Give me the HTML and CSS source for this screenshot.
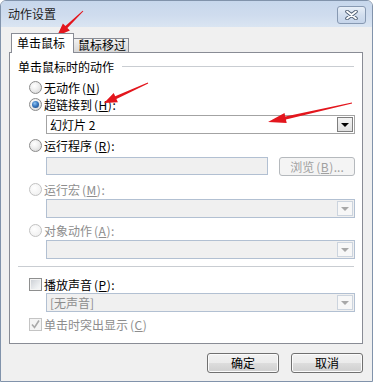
FILE: index.html
```html
<!DOCTYPE html>
<html lang="zh-CN">
<head>
<meta charset="utf-8">
<title>动作设置</title>
<link rel="stylesheet" href="styles.css">
</head>
<body>
<div class="window">
  <div class="titlebar">
    <span class="title">动作设置</span>
    <div class="close">
      <svg width="13" height="10" viewBox="0 0 13 10">
        <path d="M2 1.5 L11 8.5 M11 1.5 L2 8.5" stroke="#4f5f74" stroke-width="3.6" stroke-linecap="round" fill="none"/>
        <path d="M2 1.5 L11 8.5 M11 1.5 L2 8.5" stroke="#ffffff" stroke-width="1.8" stroke-linecap="round" fill="none"/>
      </svg>
    </div>
  </div>
  <div class="client">
    <div class="tabs">
      <div class="tab active">单击鼠标</div>
      <div class="tab inactive">鼠标移过</div>
    </div>
    <div class="panel">
      <div class="gtitle"><span>单击鼠标时的动作</span><span class="gline"></span></div>

      <div class="row opt first"><span class="radio"></span>无动作<span class="mn">(<u>N</u>)</span></div>
      <div class="row opt"><span class="radio checked"></span>超链接到<span class="mn">(<u>H</u>)</span>:</div>
      <div class="combo c1">
        <span class="ctext">幻灯片 2</span>
        <span class="dd"><span class="tri"></span></span>
      </div>

      <div class="row opt r3"><span class="radio"></span>运行程序<span class="mn">(<u>R</u>)</span>:</div>
      <div class="tbrow">
        <div class="textbox disabled"></div>
        <div class="browse">浏览<span class="mn">(<u>B</u>)</span>...</div>
      </div>

      <div class="row opt dis r4"><span class="radio disabled"></span>运行宏<span class="mn">(<u>M</u>)</span>:</div>
      <div class="combo disabled c2">
        <span class="ctext"></span>
        <span class="dd"><span class="tri"></span></span>
      </div>

      <div class="row opt dis r5"><span class="radio disabled"></span>对象动作<span class="mn">(<u>A</u>)</span>:</div>
      <div class="combo disabled c2">
        <span class="ctext"></span>
        <span class="dd"><span class="tri"></span></span>
      </div>

      <div class="sep"></div>

      <div class="row opt r6"><span class="check"></span>播放声音<span class="mn">(<u>P</u>)</span>:</div>
      <div class="combo disabled c3">
        <span class="ctext">[无声音]</span>
        <span class="dd"><span class="tri"></span></span>
      </div>

      <div class="row opt dis r7"><span class="check disabled">
        <svg width="11" height="11" viewBox="0 0 11 11"><path d="M2 5.5 L4.5 8.5 L9 1.5" stroke="#a9a9a9" stroke-width="1.6" fill="none"/></svg>
      </span>单击时突出显示<span class="mn">(<u>C</u>)</span></div>
    </div>
    <div class="buttons">
      <div class="btn">确定</div>
      <div class="btn">取消</div>
    </div>
  </div>

  <svg class="marks" width="373" height="382" viewBox="0 0 373 382">
    <polygon fill="#e3161d" points="83.35,11.36 67.4,28.1 69.9,30.6 57,36 62.9,23.4 65.4,25.9 82.65,10.64"/>
    <polygon fill="#e3161d" points="148.2,83.5 116.4,99.0 117.9,102.2 104,103 113.7,93.1 115.2,96.2 147.8,82.5"/>
    <polygon fill="#e3161d" points="352.1,103.5 285.9,119.5 286.7,122.9 268,122 284.5,113.1 285.3,116.5 351.9,102.5"/>
  </svg>
</div>
</body>
</html>
```

FILE: styles.css
```css
* { box-sizing: border-box; }

body {
  margin: 0;
  font-family: "Noto Sans CJK SC", "Noto Sans", sans-serif;
  font-size: 12px;
  color: #000;
}

.window {
  position: relative;
  width: 373px;
  height: 382px;
  border: 1px solid #8193ab;
  border-radius: 6px 6px 0 0;
  display: flex;
  flex-direction: column;
  overflow: hidden;
  background: #f0f0f0;
}

.titlebar {
  flex: none;
  height: 26px;
  display: flex;
  align-items: flex-start;
  padding-left: 7px;
  background: linear-gradient(to bottom, #c7d7ec 0%, #cfdcee 55%, #dae5f2 100%);
}

.title {
  line-height: 26px;
  color: #1e1e1e;
}

.close {
  margin-left: auto;
  margin-right: 6px;
  margin-top: 5px;
  width: 29px;
  height: 18px;
  border: 1px solid #8799b2;
  border-radius: 3px;
  background: linear-gradient(to bottom, #e8eff8, #d2deee 50%, #c6d5ea);
  display: flex;
  align-items: center;
  justify-content: center;
}

.client {
  flex: 1;
  background: #f0f0f0;
  padding: 6px 9px 0 8px;
  display: flex;
  flex-direction: column;
}

.tabs {
  height: 19px;
  display: flex;
  align-items: flex-end;
  padding-left: 2px;
}

.tab {
  border: 1px solid #898c95;
  border-bottom: none;
  white-space: nowrap;
}

.tab.active {
  position: relative;
  z-index: 1;
  width: 63px;
  height: 20px;
  margin-bottom: -1px;
  background: #fff;
  padding-left: 5px;
  line-height: 18px;
}

.tab.inactive {
  width: 56px;
  height: 14px;
  margin-left: -1px;
  padding-left: 4px;
  line-height: 12px;
  background: linear-gradient(to bottom, #f2f2f2, #e4e4e4 50%, #d8d8d8);
}

.panel {
  height: 292px;
  border: 1px solid #898c95;
  background: #fff;
  padding: 6px 8px 0 8px;
  display: flex;
  flex-direction: column;
}

.gtitle {
  height: 16px;
  line-height: 16px;
  display: flex;
  align-items: center;
}

.gline {
  flex: 1;
  height: 1px;
  margin-left: 8px;
  margin-top: -1px;
  background: #c9cdd2;
}

.row {
  height: 17px;
  line-height: 17px;
  display: flex;
  align-items: center;
  white-space: nowrap;
}

.opt { padding-left: 11px; }
.first { margin-top: 4px; }
.r3 { margin-top: 3px; }
.r4 { margin-top: 5px; }
.r5 { margin-top: 4px; }
.r6 { margin-top: 9px; }
.r7 { margin-top: 4px; }

.dis { color: #8d8d8d; }

.mn {
  margin-left: 2px;
  letter-spacing: 0.5px;
}

.radio {
  position: relative;
  width: 13px;
  height: 13px;
  margin-right: 2px;
  border-radius: 50%;
  border: 1px solid #8b8b8b;
  background: radial-gradient(circle at 40% 35%, #ffffff 0%, #eeeeee 45%, #cfcfcf 100%);
  flex: none;
}

.radio.checked::after {
  content: "";
  position: absolute;
  left: 2px;
  top: 2px;
  width: 7px;
  height: 7px;
  border-radius: 50%;
  background: radial-gradient(circle at 40% 35%, #8fc4f2 0%, #3a79c0 45%, #163f78 100%);
}

.radio.disabled {
  border-color: #c2c2c2;
  background: radial-gradient(circle at 40% 35%, #ffffff, #ececec);
}

.check {
  width: 13px;
  height: 13px;
  margin-right: 2px;
  border: 1px solid #8e8f8f;
  box-shadow: inset 0 0 0 1px #f4f4f4;
  background: linear-gradient(135deg, #c9cdd3, #eef0f2 70%, #f8f8f8);
  flex: none;
  display: flex;
  align-items: center;
  justify-content: center;
}

.check.disabled {
  border-color: #c4c4c4;
  background: #f4f4f4;
  box-shadow: none;
}

.combo {
  height: 19px;
  margin-left: 28px;
  margin-right: -1px;
  border: 1px solid #a3a3a3;
  background: #fff;
  display: flex;
  align-items: center;
  padding-left: 3px;
}

.c1 { margin-top: 2px; }
.c2 { margin-top: 1px; }
.c3 { margin-top: 0; }

.combo.disabled {
  border-color: #b2c0d2;
  background: #f0f0f0;
  color: #8d8d8d;
}

.ctext { flex: 1; line-height: 17px; }

.dd {
  width: 16px;
  height: 15px;
  margin-right: 1px;
  border: 1px solid #7e7e7e;
  background: linear-gradient(to bottom, #f3f3f3, #e0e0e0);
  display: flex;
  align-items: center;
  justify-content: center;
}

.tri {
  width: 0;
  height: 0;
  border-left: 4px solid transparent;
  border-right: 4px solid transparent;
  border-top: 4px solid #000;
}

.combo.disabled .dd {
  border-color: #ccd4de;
  background: #f7f7f7;
}

.combo.disabled .tri {
  border-top-color: #a8a8a8;
}

.tbrow {
  height: 19px;
  margin-top: 3px;
  margin-left: 28px;
  margin-right: -1px;
  display: flex;
}

.textbox {
  flex: 1;
  margin-right: 11px;
  height: 18px;
  border: 1px solid #b2c0d2;
  background: #f0f0f0;
}

.browse {
  width: 76px;
  height: 19px;
  border: 1px solid #b5b9bd;
  border-radius: 3px;
  background: #f4f4f4;
  color: #a0a0a0;
  text-align: center;
  line-height: 17px;
  white-space: nowrap;
}

.sep {
  height: 1px;
  margin-top: 7px;
  background: #c9cdd2;
}

.buttons {
  margin-top: 9px;
  display: flex;
  justify-content: flex-end;
  gap: 12px;
}

.btn {
  width: 72px;
  height: 20px;
  border: 1px solid #707070;
  border-radius: 3px;
  background: linear-gradient(to bottom, #f2f2f2 0%, #ebebeb 50%, #dddddd 51%, #cfcfcf 100%);
  box-shadow: inset 0 0 0 1px #fbfbfb;
  text-align: center;
  line-height: 18px;
}

.marks {
  position: absolute;
  left: -1px;
  top: -1px;
  pointer-events: none;
}
```
